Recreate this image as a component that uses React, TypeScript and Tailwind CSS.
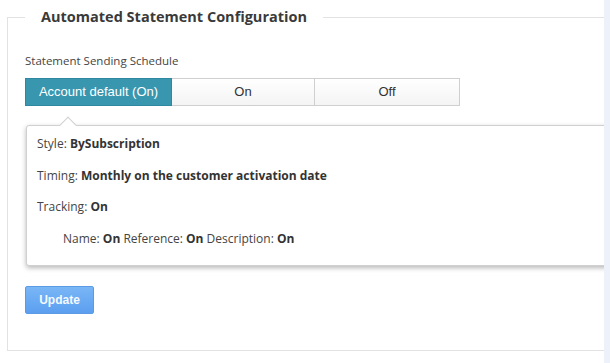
import React from "react";

export default function App() {
  const sans = { fontFamily: '"Open Sans", "Noto Sans", sans-serif' };
  return (
    <div className="w-[610px] h-[363px] bg-white flex overflow-hidden" style={sans}>
      <div className="w-[604px] h-full overflow-hidden pl-[7px] pt-[8px]">
        <fieldset className="w-[620px] h-[343px] border border-[#e2e2e2] pl-[17px] m-0 p-0">
          <legend className="px-[16px] text-[14.5px] font-bold text-[#3a3a3a] leading-[18px]">
            Automated Statement Configuration
          </legend>
          <div className="pt-[27px]">
            <div className="text-[11.5px] text-[#444] leading-[16px]">Statement Sending Schedule</div>
            <div className="flex mt-[9px] h-[28px] text-[13px]" style={{ fontFamily: '"Liberation Sans", Arial, sans-serif' }}>
              <div className="w-[147px] flex items-center justify-center bg-[#3896af] text-white border border-[#2f87a0]">
                Account default (On)
              </div>
              <div className="w-[143px] flex items-center justify-center bg-gradient-to-b from-white to-[#f4f4f4] text-[#333] border-y border-r border-[#cfcfcf]">
                On
              </div>
              <div className="w-[145px] flex items-center justify-center bg-gradient-to-b from-white to-[#f4f4f4] text-[#333] border-y border-r border-[#cfcfcf]">
                Off
              </div>
            </div>
            <div className="relative mt-[19px] ml-px w-[600px] h-[141px] bg-white border border-[#d0d0d0] rounded-[3px] shadow-[0_2px_5px_rgba(0,0,0,0.28)] pl-[10px] pt-[2px] text-[12px] text-[#444]">
              <div className="absolute -top-[7px] left-[35px] w-[12px] h-[12px] bg-white border-l border-t border-[#d0d0d0] rotate-45" />
              <div className="h-[32px] flex items-center">
                <span>Style:&nbsp;</span>
                <span className="font-bold text-[#333]">BySubscription</span>
              </div>
              <div className="h-[31px] flex items-center">
                <span>Timing:&nbsp;</span>
                <span className="font-bold text-[#333]">Monthly on the customer activation date</span>
              </div>
              <div className="h-[31px] flex items-center">
                <span>Tracking:&nbsp;</span>
                <span className="font-bold text-[#333]">On</span>
              </div>
              <div className="h-[33px] flex items-center pl-[26px]">
                <span>Name:&nbsp;</span>
                <span className="font-bold text-[#333]">On</span>
                <span>&nbsp;Reference:&nbsp;</span>
                <span className="font-bold text-[#333]">On</span>
                <span>&nbsp;Description:&nbsp;</span>
                <span className="font-bold text-[#333]">On</span>
              </div>
            </div>
            <button
              className="mt-[20px] w-[69px] h-[28px] rounded-[2px] border border-[#5b9be6] bg-gradient-to-b from-[#79b6f6] to-[#5c9ff0] text-[#f4f9ff] text-[12px] font-bold"
              style={{ fontFamily: '"Liberation Sans", Arial, sans-serif' }}
            >
              Update
            </button>
          </div>
        </fieldset>
      </div>
      <div className="w-[6px] h-full bg-[#edf2fa]" />
    </div>
  );
}
